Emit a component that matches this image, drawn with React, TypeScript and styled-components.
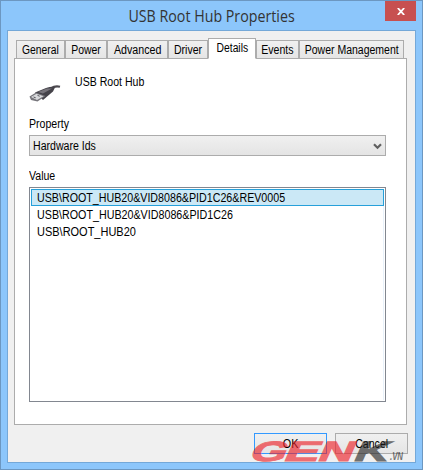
import React from 'react';
import styled, { createGlobalStyle } from 'styled-components';

const Global = createGlobalStyle`
  * { box-sizing: border-box; }
  body { margin: 0; font-family: "Liberation Sans", Arial, sans-serif; font-size: 12px; color: #000; }
`;

const Window = styled.div`
  width: 423px;
  height: 470px;
  border: 1px solid #6c97c1;
  background: #8cc6fb;
  padding: 0 6px 6px;
  display: flex;
  flex-direction: column;
`;

const TitleBar = styled.header`
  height: 29px;
  flex: none;
  display: grid;
  grid-template-columns: 31px 1fr 31px;
  align-items: start;
`;

const Title = styled.h1`
  grid-column: 2;
  margin: 0;
  height: 30px;
  display: flex;
  justify-content: center;
  align-items: center;
  font: 400 15.5px "Open Sans", "Noto Sans", sans-serif;
  color: #333;
`;

const TitleText = styled.span`
  white-space: nowrap;
  line-height: 22px;
  transform: scaleX(0.918);
`;

const CloseButton = styled.button`
  width: 31px;
  height: 20px;
  border: 0;
  padding: 0;
  background: #c75050;
  display: flex;
  align-items: center;
  justify-content: center;
`;

const Label = styled.span<{ $scale?: number; $center?: boolean }>`
  display: inline-block;
  white-space: nowrap;
  line-height: 15px;
  transform: scaleX(${p => p.$scale ?? 0.88});
  transform-origin: ${p => (p.$center ? 'center' : 'left')};
`;

const Client = styled.main`
  flex: 1;
  border: 1px solid #74a8d8;
  background: #f0f0f0;
  padding: 7px 8px 8px 6px;
  display: flex;
  flex-direction: column;
`;

const Tabs = styled.nav`
  height: 21px;
  flex: none;
  padding-left: 2px;
  margin-bottom: -1px;
  display: flex;
  align-items: flex-end;
  z-index: 1;
`;

const Tab = styled.div<{ $width: number; $active?: boolean }>`
  width: ${p => p.$width}px;
  flex: none;
  height: ${p => (p.$active ? 21 : 19)}px;
  border: 1px solid #acacac;
  border-bottom-color: ${p => (p.$active ? '#fff' : '#acacac')};
  background: ${p => (p.$active ? '#fff' : 'linear-gradient(#f0f0f0, #e5e5e5)')};
  display: flex;
  justify-content: center;
  padding-top: 2px;
`;

const Panel = styled.section`
  width: 393px;
  height: 367px;
  flex: none;
  border: 1px solid #acacac;
  background: #fff;
  padding: 16px 20px 22px 14px;
  display: flex;
  flex-direction: column;
`;

const Device = styled.div`
  height: 42px;
  display: flex;
  gap: 14px;
`;

const FieldLabel = styled.div`
  height: 18px;
  display: flex;
`;

const Combo = styled.div`
  height: 21px;
  border: 1px solid #acacac;
  background: linear-gradient(#f0f0f0, #e4e4e4);
  padding: 1px 3px 0;
  margin-bottom: 13px;
  display: flex;
  align-items: center;
  justify-content: space-between;
`;

const List = styled.div`
  height: 215px;
  border: 1px solid #828790;
  padding: 1px;
`;

const ListInner = styled.div`
  height: 100%;
  border-right: 1px solid #e9f2fb;
`;

const Item = styled.div<{ $selected?: boolean }>`
  height: 17px;
  margin-right: -1px;
  border: 1px solid ${p => (p.$selected ? '#26a0da' : 'transparent')};
  border-right-color: ${p => (p.$selected ? '#26a0da' : '#e9f2fb')};
  background: ${p => (p.$selected ? '#cbe8f6' : 'transparent')};
  padding: 1px 0 0 5px;
`;

const Footer = styled.footer`
  position: relative;
  display: flex;
  justify-content: flex-end;
  gap: 8px;
  margin: 8px -1px 0 0;
`;

const Button = styled.button<{ $primary?: boolean }>`
  width: 73px;
  height: 21px;
  padding: 2px 0 0;
  font: inherit;
  color: #000;
  border: 1px solid ${p => (p.$primary ? '#3399ff' : '#acacac')};
  background: linear-gradient(#f0f0f0, #e5e5e5);
  display: flex;
  align-items: center;
  justify-content: center;
`;

const Watermark = styled.svg`
  position: absolute;
  right: 0;
  top: 3px;
  width: 164px;
  height: 28px;
  overflow: visible;
  pointer-events: none;
`;

const tabs = [
  { name: 'General', width: 49, scale: 0.86 },
  { name: 'Power', width: 42, scale: 0.87 },
  { name: 'Advanced', width: 61, scale: 0.89 },
  { name: 'Driver', width: 40, scale: 0.88 },
  { name: 'Details', width: 48, scale: 0.86 },
  { name: 'Events', width: 43, scale: 0.88 },
  { name: 'Power Management', width: 105, scale: 0.875 },
];

const ids = [
  { text: 'USB\\ROOT_HUB20&VID8086&PID1C26&REV0005', scale: 0.89 },
  { text: 'USB\\ROOT_HUB20&VID8086&PID1C26', scale: 0.893 },
  { text: 'USB\\ROOT_HUB20', scale: 0.915 },
];

const logoLetters = [
  { char: 'G', x: 4, width: 36, color: '#ed1c24' },
  { char: 'E', x: 38, width: 35, color: '#ed1c24' },
  { char: 'N', x: 72, width: 35, color: '#ed1c24' },
  { char: 'K', x: 108, width: 34, color: '#222' },
];

const UsbIcon = () => (
  <svg width="32" height="32" viewBox="0 0 32 32">
    <path d="M22 13.5 Q26 10.5 31 11.8" stroke="#4d4a50" strokeWidth="2.2" fill="none" />
    <path d="M6 17.5 L17 13 Q24 10.8 26 12.5 L24 16.5 L14 25 Z" fill="#45434a" />
    <path d="M9 17 L18 13.4 L23 13.4 L14 18.6Z" fill="#77747b" />
    <path d="M.5 21.5 L7 17.5 L16.5 21 L8.5 26.5 L2 25Z" fill="#77767c" />
    <path d="M2 22 L7.5 18.8 L14.5 21.3 L8 25Z" fill="#d8d9dc" />
    <path d="M4.5 22 l2.2 .8 M8.5 20.4 l2.2 .8" stroke="#55555b" />
  </svg>
);

export default function App() {
  return (
    <>
      <Global />
      <Window>
        <TitleBar>
          <Title><TitleText>USB Root Hub Properties</TitleText></Title>
          <CloseButton aria-label="Close">
            <svg width="8" height="7" viewBox="0 0 8 7"><path d="M.8 0 L7.2 7 M7.2 0 L.8 7" stroke="#fff" strokeWidth="1.8" /></svg>
          </CloseButton>
        </TitleBar>
        <Client>
          <Tabs>
            {tabs.map(t => (
              <Tab key={t.name} $width={t.width} $active={t.name === 'Details'}>
                <Label $center $scale={t.scale}>{t.name}</Label>
              </Tab>
            ))}
          </Tabs>
          <Panel>
            <Device><UsbIcon /><Label>USB Root Hub</Label></Device>
            <FieldLabel><Label>Property</Label></FieldLabel>
            <Combo>
              <Label>Hardware Ids</Label>
              <svg width="9" height="7" viewBox="0 0 9 7"><path d="M1 1.2 L4.5 4.7 L8 1.2" fill="none" stroke="#606060" strokeWidth="2.2" /></svg>
            </Combo>
            <FieldLabel><Label>Value</Label></FieldLabel>
            <List>
              <ListInner>
                {ids.map((item, i) => (
                  <Item key={item.text} $selected={i === 0}><Label $scale={item.scale}>{item.text}</Label></Item>
                ))}
              </ListInner>
            </List>
          </Panel>
          <Footer>
            <Button $primary><Label $center $scale={0.9}>OK</Label></Button>
            <Button><Label $center>Cancel</Label></Button>
            <Watermark viewBox="0 0 164 28">
              <g fontFamily="Liberation Sans, Arial, sans-serif" fontWeight="700" opacity=".62">
                <g transform="translate(0 24.5) skewX(-24)" fontSize="28" strokeWidth="1">
                  {logoLetters.map(l => (
                    <text key={l.char} x={l.x} y="0" fill={l.color} stroke={l.color} textLength={l.width} lengthAdjust="spacingAndGlyphs">{l.char}</text>
                  ))}
                </g>
                <text x="146" y="24" fontSize="10" fontStyle="italic" fill="#222" textLength="13" lengthAdjust="spacingAndGlyphs">.VN</text>
              </g>
            </Watermark>
          </Footer>
        </Client>
      </Window>
    </>
  );
}
